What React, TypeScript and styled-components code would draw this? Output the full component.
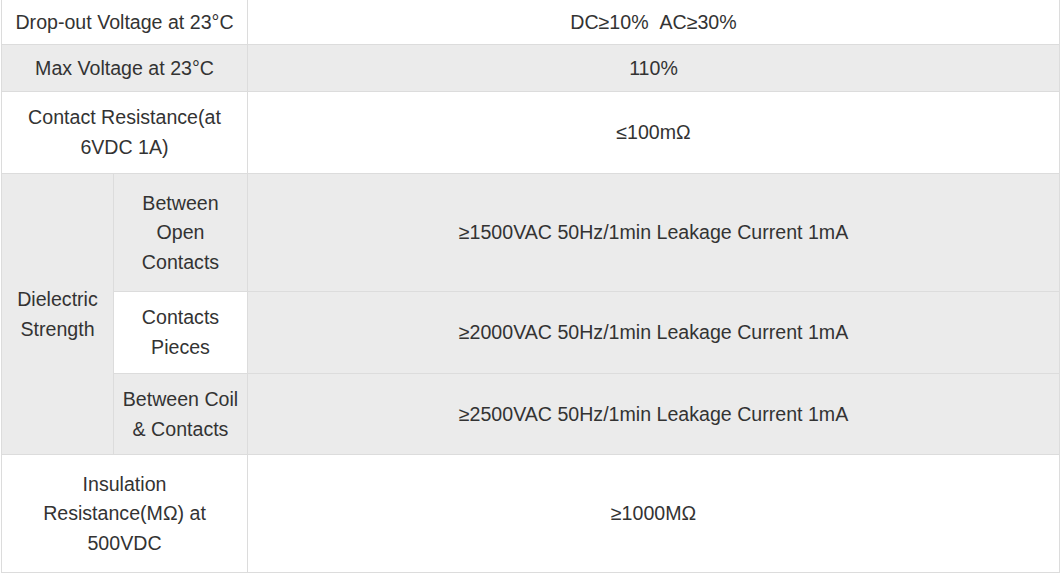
import React from "react";
import styled, { createGlobalStyle } from "styled-components";

const Global = createGlobalStyle`
  html, body { margin: 0; padding: 0; background: #ffffff; }
  body { font-family: "Liberation Sans", Arial, sans-serif; }
`;

const Wrap = styled.div`
  width: 1059px;
  margin-left: 1px;
`;

const Grid = styled.div`
  display: grid;
  grid-template-columns: 112px 134px 812px;
  grid-template-rows: 45px 47px 82px 118px 82px 81px 118px;
  border-left: 1px solid #dcdcdc;
  box-sizing: content-box;
`;

const Cell = styled.div<{ $gray?: boolean; $col: string; $row: string; $pad?: number }>`
  grid-column: ${(p) => p.$col};
  grid-row: ${(p) => p.$row};
  box-sizing: border-box;
  display: flex;
  align-items: center;
  justify-content: center;
  text-align: center;
  padding: 1px ${(p) => p.$pad ?? 6}px 0;
  background: ${(p) => (p.$gray ? "#ebebeb" : "#ffffff")};
  border-right: 1px solid #dcdcdc;
  border-bottom: 1px solid #dcdcdc;
  color: #333333;
  font-size: 19.6px;
  line-height: 29.6px;
`;

type Row = { label: string; value: string; gray: boolean; row: string };

const simpleTop: Row[] = [
  { label: "Drop-out Voltage at 23°C", value: "DC≥10%\u00a0\u00a0AC≥30%", gray: false, row: "1" },
  { label: "Max Voltage at 23°C", value: "110%", gray: true, row: "2" },
  { label: "Contact Resistance(at 6VDC 1A)", value: "≤100mΩ", gray: false, row: "3" },
];

const dielectric = [
  { sub: "Between Open Contacts", value: "≥1500VAC 50Hz/1min Leakage Current 1mA", subGray: true, row: "4" },
  { sub: "Contacts Pieces", value: "≥2000VAC 50Hz/1min Leakage Current 1mA", subGray: false, row: "5" },
  { sub: "Between Coil & Contacts", value: "≥2500VAC 50Hz/1min Leakage Current 1mA", subGray: true, row: "6" },
];

export default function App() {
  return (
    <>
      <Global />
      <Wrap>
        <Grid>
          {simpleTop.map((r) => (
            <React.Fragment key={r.row}>
              <Cell $col="1 / 3" $row={r.row} $gray={r.gray} $pad={8}>{r.label}</Cell>
              <Cell $col="3" $row={r.row} $gray={r.gray}>{r.value}</Cell>
            </React.Fragment>
          ))}
          <Cell $col="1" $row="4 / span 3" $gray>Dielectric Strength</Cell>
          {dielectric.map((d) => (
            <React.Fragment key={d.row}>
              <Cell $col="2" $row={d.row} $gray={d.subGray}>{d.sub}</Cell>
              <Cell $col="3" $row={d.row} $gray>{d.value}</Cell>
            </React.Fragment>
          ))}
          <Cell $col="1 / 3" $row="7" $pad={20}>Insulation Resistance(MΩ) at 500VDC</Cell>
          <Cell $col="3" $row="7">≥1000MΩ</Cell>
        </Grid>
      </Wrap>
    </>
  );
}
